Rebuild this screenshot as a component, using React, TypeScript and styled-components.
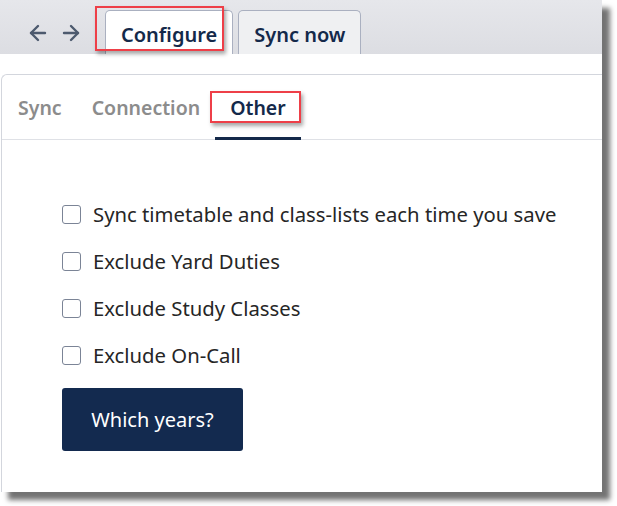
import React from 'react';
import styled, { createGlobalStyle } from 'styled-components';
import { ArrowLeft, ArrowRight } from 'lucide-react';

const GlobalStyle = createGlobalStyle`
  html, body {
    margin: 0;
    padding: 0;
    background: #ffffff;
  }
  body {
    font-family: "Segoe UI", "Noto Sans", "Open Sans", sans-serif;
  }
  #root {
    width: 617px;
    height: 506px;
    overflow: hidden;
  }
`;

const Window = styled.div`
  width: 602px;
  height: 492px;
  background: #ffffff;
  box-shadow: 8px 8px 5px rgba(0, 0, 0, 0.55);
  display: flex;
  flex-direction: column;
`;

const TopBar = styled.div`
  height: 54px;
  flex: none;
  background: linear-gradient(#e6e7eb, #dcdde2);
  display: flex;
  align-items: flex-end;
  padding-left: 26px;
`;

const NavArrows = styled.div`
  display: flex;
  gap: 9px;
  align-self: center;
  margin-top: 12px;
  margin-right: 22px;
  color: #4d5a6e;
`;

const TopTab = styled.div<{ $active?: boolean }>`
  position: relative;
  height: 44px;
  box-sizing: border-box;
  padding: 4px 15px 0;
  margin-right: 5px;
  display: flex;
  align-items: center;
  border: 1px solid #aab0c0;
  border-bottom: none;
  border-radius: 5px 5px 0 0;
  background: ${(p) => (p.$active ? '#ffffff' : '#eff0f2')};
  color: #14294a;
  font-size: 20px;
  font-weight: 600;
`;

const Callout = styled.div<{ $l: number; $t: number; $w: number; $h: number }>`
  position: absolute;
  left: ${(p) => p.$l}px;
  top: ${(p) => p.$t}px;
  width: ${(p) => p.$w}px;
  height: ${(p) => p.$h}px;
  box-sizing: border-box;
  border: 2px solid #ee3f48;
  box-shadow: 2px 3px 4px rgba(0, 0, 0, 0.35);
  pointer-events: none;
`;

const Spacer = styled.div`
  height: 20px;
  flex: none;
`;

const Panel = styled.div`
  flex: 1;
  min-height: 0;
  margin-left: 1px;
  border-top: 1px solid #d3d6dd;
  border-left: 1px solid #d3d6dd;
  border-top-left-radius: 6px;
  display: flex;
  flex-direction: column;
`;

const SubTabs = styled.div`
  display: flex;
  height: 64px;
  flex: none;
  padding-left: 1px;
  border-bottom: 1px solid #dfe1e6;
`;

const SubTab = styled.div<{ $active?: boolean }>`
  position: relative;
  padding: 3px 15px 0;
  display: flex;
  align-items: center;
  font-size: 19.5px;
  font-weight: 600;
  color: ${(p) => (p.$active ? '#14294a' : '#8c8c8c')};
  border-bottom: 3px solid ${(p) => (p.$active ? '#14294a' : 'transparent')};
  margin-bottom: -1px;
  box-sizing: border-box;
`;

const Options = styled.div`
  display: flex;
  flex-direction: column;
  gap: 23px;
  padding: 62px 0 0 60px;
`;

const Row = styled.label`
  display: flex;
  align-items: center;
  gap: 12px;
  font-size: 20.3px;
  color: #262626;
  height: 24px;
`;

const Box = styled.span`
  flex: none;
  width: 19px;
  height: 19px;
  box-sizing: border-box;
  border: 1.5px solid #7b8496;
  border-radius: 3px;
  background: #ffffff;
`;

const ActionButton = styled.button`
  align-self: flex-start;
  margin-top: -2px;
  width: 181px;
  height: 63px;
  border: none;
  border-radius: 3px;
  background: #132a4f;
  color: #ffffff;
  font-family: inherit;
  font-size: 20px;
`;

const options = [
  'Sync timetable and class-lists each time you save',
  'Exclude Yard Duties',
  'Exclude Study Classes',
  'Exclude On-Call',
];

export default function App() {
  return (
    <>
      <GlobalStyle />
      <Window>
        <TopBar>
          <NavArrows>
            <ArrowLeft size={24} strokeWidth={2.4} />
            <ArrowRight size={24} strokeWidth={2.4} />
          </NavArrows>
          <TopTab $active>
            Configure
            <Callout $l={-11} $t={-5} $w={129} $h={45} />
          </TopTab>
          <TopTab>Sync now</TopTab>
        </TopBar>
        <Spacer />
        <Panel>
          <SubTabs>
            <SubTab>Sync</SubTab>
            <SubTab>Connection</SubTab>
            <SubTab $active>
              Other
              <Callout $l={-5} $t={16} $w={91} $h={32} />
            </SubTab>
          </SubTabs>
          <Options>
            {options.map((o) => (
              <Row key={o}>
                <Box />
                {o}
              </Row>
            ))}
            <ActionButton>Which years?</ActionButton>
          </Options>
        </Panel>
      </Window>
    </>
  );
}
